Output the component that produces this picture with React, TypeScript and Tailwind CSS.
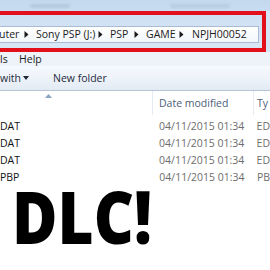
import React from "react";

const Arrow = () => (
  <svg width="5" height="7" viewBox="0 0 5 7" className="shrink-0 mr-[7px]">
    <path d="M0.5 0 L4.5 3.5 L0.5 7 Z" fill="#1b1b1b" />
  </svg>
);

export default function App() {
  const font = { fontFamily: '"Open Sans", "Noto Sans", sans-serif' };
  const rows = [
    { n: "DAT", t: "ED" },
    { n: "DAT", t: "ED" },
    { n: "DAT", t: "ED" },
    { n: "PBP", t: "PB" },
  ];
  return (
    <div className="w-[270px] h-[270px] overflow-hidden bg-white relative whitespace-nowrap" style={font}>
      {/* title bar */}
      <div className="h-[11px] bg-gradient-to-b from-[#c3d8ee] to-[#c9ddf1] flex items-center">
        <div className="ml-[30px] w-[40px] h-[4px] bg-[#b5c9de] rounded blur-[1px]" />
        <div className="ml-[100px] w-[60px] h-[4px] bg-[#b8cde2] rounded blur-[1px]" />
      </div>
      {/* red box row */}
      <div className="flex bg-[#cfe0f2]">
        <div className="w-[266px] border-y-[4px] border-r-[4px] border-[#e3101c] bg-gradient-to-b from-[#cee0f3] to-[#d9e7f5] pt-[11px] pb-[5px]">
          <div className="h-[17px] w-[259px] bg-gradient-to-b from-[#ffffff] to-[#f2f6fb] border-y border-r border-[#a9bcd3] flex items-center text-[10.5px] leading-none text-[#1c1c1c]">
            <span className="w-[25px] -ml-[1px]">uter</span>
            <Arrow />
            <span className="w-[62px]">Sony PSP (J:)</span>
            <Arrow />
            <span className="w-[24px]">PSP</span>
            <Arrow />
            <span className="w-[33px]">GAME</span>
            <Arrow />
            <span className="ml-[1px]">NPJH00052</span>
          </div>
        </div>
        <div className="flex-1 bg-[#d6e5f5]" />
      </div>
      {/* menu bar */}
      <div className="h-[14px] bg-[#eef3f9] flex items-center text-[10.5px] leading-none text-[#1c1c1c]">
        <span className="w-[19px]">ls</span>
        <span>Help</span>
      </div>
      {/* toolbar */}
      <div className="h-[25px] bg-gradient-to-b from-[#f6f9fd] via-[#eef3fa] to-[#e2eaf4] border-b border-[#b6c4d6] flex items-center text-[10.5px] leading-none text-[#1e2a3c]">
        <span className="w-[23px]">with</span>
        <svg width="6" height="4" viewBox="0 0 6 4" className="shrink-0">
          <path d="M0 0 L6 0 L3 4 Z" fill="#1e2a3c" />
        </svg>
        <span className="ml-[24px]">New folder</span>
      </div>
      {/* header */}
      <div className="h-[24px] relative flex items-center text-[10.5px] leading-none text-[#4c607a]">
        <svg width="7" height="4" viewBox="0 0 7 4" className="absolute left-[45px] top-[3px]">
          <path d="M0 4 L3.5 0 L7 4 Z" fill="#8aa3c2" />
        </svg>
        <div className="w-[153px] h-full border-r border-[#e6ebf1]" />
        <span className="ml-[6px] w-[94px]">Date modified</span>
        <div className="w-px h-full bg-[#e6ebf1]" />
        <span className="ml-[3px]">Ty</span>
      </div>
      {/* rows */}
      <div className="pt-[3px] text-[10.5px] leading-none">
        {rows.map((r, i) => (
          <div key={i} className="h-[17px] flex items-center">
            <span className="w-[160px] text-[#111]">{r.n}</span>
            <span className="w-[98px] text-[#6d6d6d]">04/11/2015 01:34</span>
            <span className="text-[#6d6d6d]">{r.t}</span>
          </div>
        ))}
      </div>
      {/* DLC */}
      <div
        className="ml-[12px] -mt-[7px] text-[73px] font-extrabold leading-none text-black origin-left scale-x-[0.85]"
        style={{ fontFamily: '"Open Sans", sans-serif' }}
      >
        DLC!
      </div>
    </div>
  );
}
